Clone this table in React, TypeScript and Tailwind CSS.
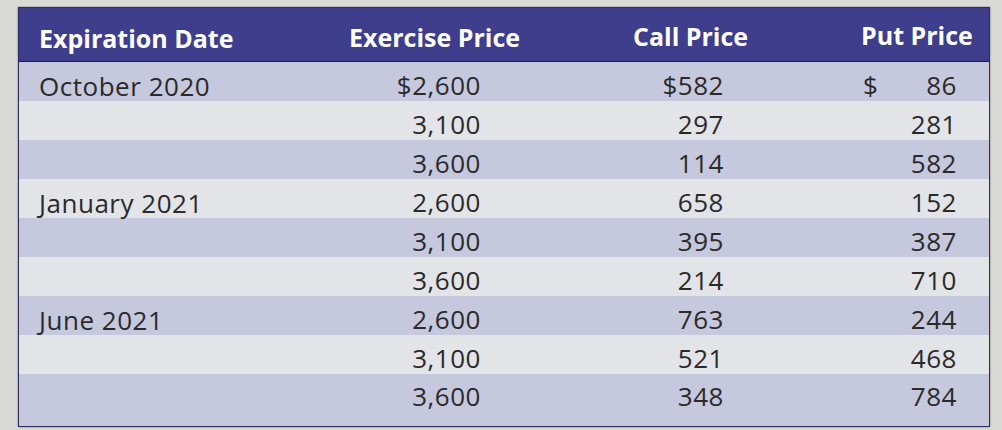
import React from 'react';

type Row = { date?: string; exercise: string; call: string; put: string };

const rows: Row[] = [
  { date: 'October 2020', exercise: '$2,600', call: '$582', put: '86' },
  { exercise: '3,100', call: '297', put: '281' },
  { exercise: '3,600', call: '114', put: '582' },
  { date: 'January 2021', exercise: '2,600', call: '658', put: '152' },
  { exercise: '3,100', call: '395', put: '387' },
  { exercise: '3,600', call: '214', put: '710' },
  { date: 'June 2021', exercise: '2,600', call: '763', put: '244' },
  { exercise: '3,100', call: '521', put: '468' },
  { exercise: '3,600', call: '348', put: '784' },
];

const cols = 'grid grid-cols-[312px_210px_260px_190px]';

export default function App() {
  return (
    <div className="h-[430px] w-[1002px] overflow-hidden bg-[#d9d9d6] pl-[18px] pt-[7px] font-['Open_Sans',sans-serif]">
      <div className="w-[972px] border border-[#2c2c5e] shadow-[0_0_2px_rgba(0,0,0,0.4)]">
        {/* Header */}
        <div className={`${cols} h-[53px] items-center bg-[#3e3e8c] text-[25px] font-bold text-white`}>
          <div className="pl-[20px] pt-[8px]">Expiration Date</div>
          <div className="pl-[18px] pt-[6px]">Exercise Price</div>
          <div className="pl-[92px] pt-[4px]">Call Price</div>
          <div className="pl-[60px] pt-[2px]">Put Price</div>
        </div>

        {/* Body */}
        <div className="border-t border-[#1e1e3a] text-[26px] tracking-[0.02em] leading-none text-[#2a2a2a]">
          {rows.map((r, i) => (
            <div
              key={i}
              className={`${cols} ${i === rows.length - 1 ? 'h-[52px] pb-[8px]' : 'h-[39px] pt-[6px]'} items-center ${
                i % 2 === 0 ? 'bg-[#c6c8de]' : 'bg-[#e3e4e8]'
              }`}
            >
              <div className="pl-[20px] pt-[2px]">{r.date ?? ''}</div>
              <div className="pr-[60px] text-right">{r.exercise}</div>
              <div className="pr-[77px] text-right">{r.call}</div>
              <div className="flex justify-end pr-[34px]">
                {i === 0 ? (
                  <span className="flex w-[94px] justify-between">
                    <span>$</span>
                    <span>{r.put}</span>
                  </span>
                ) : (
                  <span>{r.put}</span>
                )}
              </div>
            </div>
          ))}
        </div>
      </div>
    </div>
  );
}
